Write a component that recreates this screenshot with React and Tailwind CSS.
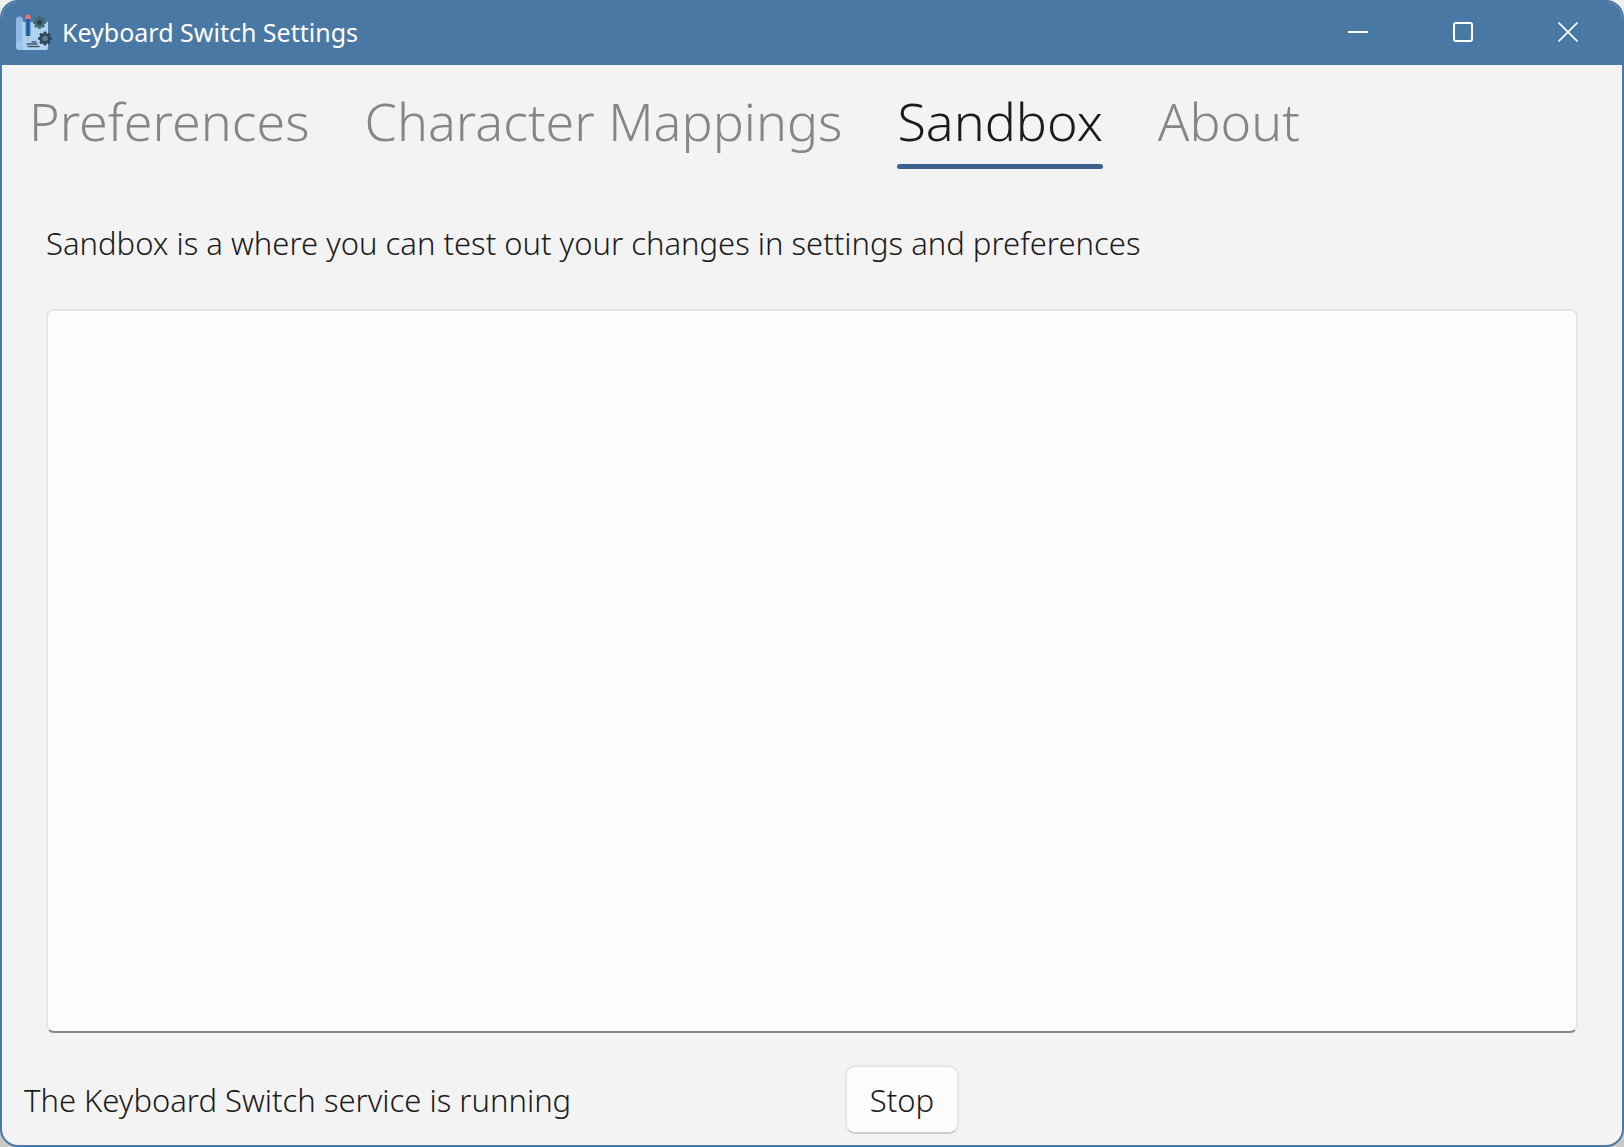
const TABS = ["Preferences", "Character Mappings", "Sandbox", "About"];

function AppIcon() {
  const teeth = [0, 45, 90, 135];
  return (
    <svg className="size-9" viewBox="0 0 36 36" aria-hidden="true">
      <path d="M3 2.5C1 2.5 0 4 0 6v27.500h7V6C7 4 5.500 2.500 3 2.500z" fill="#8fb9e3" />
      <path d="M6 8h26v26a2 2 0 0 1-2 2H7z" fill="#aed3f2" />
      <path d="M0 31a4 4 0 0 1 4-4c3 0 3 3 3 3v6H3a3 3 0 0 1-3-3z" fill="#9cc5ec" />
      <path d="M9.500 5h5v17h-5z" fill="#3579bd" />
      <path d="M11 5h2v17h-2z" fill="#245a94" />
      <path d="M9.500 22h5L12 27.500z" fill="#c3bfc0" />
      <path d="M9.500 5V3a2.500 2.500 0 0 1 5 0v2z" fill="#ff6f70" />
      <path d="M16 28h4M11 30h10M12 32.500h11" stroke="#42586c" strokeWidth="1.300" strokeLinecap="round" />
      <g fill="#476b76">
        {teeth.map((a) => (
          <rect key={a} x="22" y="2" width="3" height="13" rx="1" transform={`rotate(${a} 23.5 8.500)`} />
        ))}
        <circle cx="23.500" cy="8.500" r="5" />
      </g>
      <circle cx="23.500" cy="8.500" r="2.500" fill="#2c3f50" />
      <g fill="#33475a">
        {teeth.map((a) => (
          <rect key={a} x="27.500" y="17.500" width="3" height="14" rx="1" transform={`rotate(${a} 29 24.500)`} />
        ))}
        <circle cx="29" cy="24.500" r="5.500" />
      </g>
      <circle cx="29" cy="24.500" r="2.800" fill="#55808a" />
    </svg>
  );
}

function CaptionButton({ label, children }) {
  return (
    <button type="button" aria-label={label} className="flex w-[105px] items-center justify-center">
      <svg className="size-5" viewBox="0 0 20 20" fill="none" stroke="white" strokeWidth="2" aria-hidden="true">
        {children}
      </svg>
    </button>
  );
}

export default function App() {
  return (
    <div className="h-screen bg-linear-to-b from-[#eeeeee] to-[#c8c8c8] font-['Noto_Sans',sans-serif] text-[#1b1b1b]">
      <div className="flex h-full flex-col overflow-hidden rounded-[18px] border-2 border-[#4a78a4] bg-[#f3f3f3]">
        <header className="flex h-[63px] shrink-0 justify-between bg-[#4a78a4] pb-[3px] text-white">
          <div className="flex items-center gap-[10px] pl-[14px]">
            <AppIcon />
            <h1 className="text-[25px] leading-9">Keyboard Switch Settings</h1>
          </div>
          <div className="flex pr-[2px]">
            <CaptionButton label="Minimize">
              <path d="M0 10h20" />
            </CaptionButton>
            <CaptionButton label="Maximize">
              <rect x="1" y="1" width="18" height="18" rx="2" />
            </CaptionButton>
            <CaptionButton label="Close">
              <path d="M0.500 0.500l19 19M19.500 0.500l-19 19" strokeWidth="1.600" />
            </CaptionButton>
          </div>
        </header>

        <nav role="tablist" className="flex gap-[55px] px-[27px] pt-4 text-[52px] leading-[80px] font-light">
          {TABS.map((tab) => {
            const active = tab === "Sandbox";
            return (
              <button
                key={tab}
                type="button"
                role="tab"
                aria-selected={active}
                className={active ? "flex flex-col gap-[3px]" : "flex flex-col text-[#868686]"}
              >
                {tab}
                {active && <span className="h-[5px] w-full rounded-full bg-[#3a608f]" />}
              </button>
            );
          })}
        </nav>

        <main className="flex grow flex-col gap-[42px] px-11 pt-[50px]">
          <label htmlFor="sandbox" className="text-[31px] leading-12 font-light">
            Sandbox is a where you can test out your changes in settings and preferences
          </label>
          <textarea
            id="sandbox"
            className="w-full grow resize-none rounded-lg border-2 border-[#e6e6e6] border-b-[#868686] bg-[#fcfcfc] p-4 text-[31px] font-light outline-none"
          />
        </main>

        <footer className="grid shrink-0 grid-cols-2 items-center px-[22px] pt-8 pb-[11px] text-[31px] leading-12 font-light">
          <p>The Keyboard Switch service is running</p>
          <div className="pl-[33px]">
            <button
              type="button"
              className="h-[69px] w-[114px] rounded-[10px] border-2 border-[#e6e6e6] border-b-[#cccccc] bg-[#fcfcfc]"
            >
              Stop
            </button>
          </div>
        </footer>
      </div>
    </div>
  );
}
